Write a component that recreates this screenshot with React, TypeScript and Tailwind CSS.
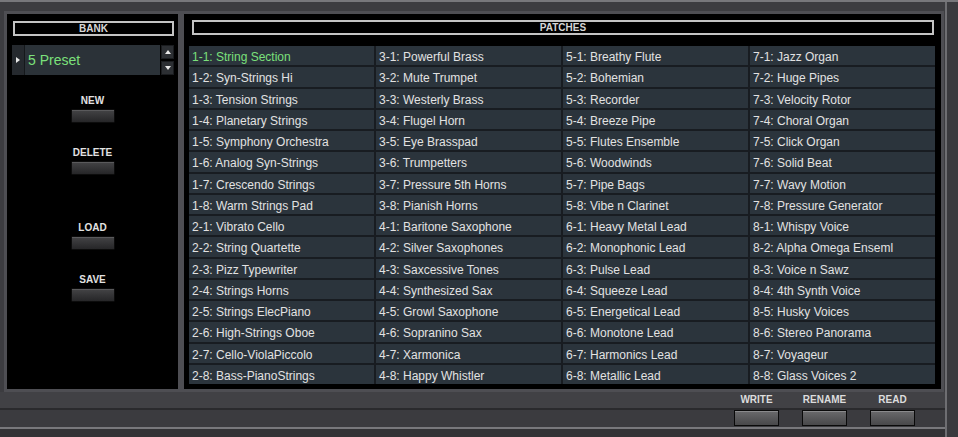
import React from 'react';

const columns: string[][] = [
  [
    '1-1: String Section',
    '1-2: Syn-Strings Hi',
    '1-3: Tension Strings',
    '1-4: Planetary Strings',
    '1-5: Symphony Orchestra',
    '1-6: Analog Syn-Strings',
    '1-7: Crescendo Strings',
    '1-8: Warm Strings Pad',
    '2-1: Vibrato Cello',
    '2-2: String Quartette',
    '2-3: Pizz Typewriter',
    '2-4: Strings Horns',
    '2-5: Strings ElecPiano',
    '2-6: High-Strings Oboe',
    '2-7: Cello-ViolaPiccolo',
    '2-8: Bass-PianoStrings',
  ],
  [
    '3-1: Powerful Brass',
    '3-2: Mute Trumpet',
    '3-3: Westerly Brass',
    '3-4: Flugel Horn',
    '3-5: Eye Brasspad',
    '3-6: Trumpetters',
    '3-7: Pressure 5th Horns',
    '3-8: Pianish Horns',
    '4-1: Baritone Saxophone',
    '4-2: Silver Saxophones',
    '4-3: Saxcessive Tones',
    '4-4: Synthesized Sax',
    '4-5: Growl Saxophone',
    '4-6: Sopranino Sax',
    '4-7: Xarmonica',
    '4-8: Happy Whistler',
  ],
  [
    '5-1: Breathy Flute',
    '5-2: Bohemian',
    '5-3: Recorder',
    '5-4: Breeze Pipe',
    '5-5: Flutes Ensemble',
    '5-6: Woodwinds',
    '5-7: Pipe Bags',
    '5-8: Vibe n Clarinet',
    '6-1: Heavy Metal Lead',
    '6-2: Monophonic Lead',
    '6-3: Pulse Lead',
    '6-4: Squeeze Lead',
    '6-5: Energetical Lead',
    '6-6: Monotone Lead',
    '6-7: Harmonics Lead',
    '6-8: Metallic Lead',
  ],
  [
    '7-1: Jazz Organ',
    '7-2: Huge Pipes',
    '7-3: Velocity Rotor',
    '7-4: Choral Organ',
    '7-5: Click Organ',
    '7-6: Solid Beat',
    '7-7: Wavy Motion',
    '7-8: Pressure Generator',
    '8-1: Whispy Voice',
    '8-2: Alpha Omega Enseml',
    '8-3: Voice n Sawz',
    '8-4: 4th Synth Voice',
    '8-5: Husky Voices',
    '8-6: Stereo Panorama',
    '8-7: Voyageur',
    '8-8: Glass Voices 2',
  ],
];

// 列優先で並べる（1列目が 1-1〜2-8）
const cells = Array.from({ length: 16 }).flatMap((_, row) => columns.map((col) => col[row]));

const DarkButton: React.FC<{ label: string; className?: string }> = ({ label, className = '' }) => (
  <div className={`flex flex-col items-center ${className}`}>
    <span className="text-[10px] leading-[11px] font-bold text-[#e2e2e2]">{label}</span>
    <div className="mt-[3px] w-[44px] h-[14px] rounded-[1px] border border-[#0c0c0c] bg-gradient-to-b from-[#444446] to-[#262628] shadow-[inset_0_1px_0_#5a5a5c]" />
  </div>
);

const App: React.FC = () => {
  return (
    <div
      className="w-[958px] h-[437px] overflow-hidden bg-[#3c3c40] border-t-2 border-[#77777b] flex"
      style={{ fontFamily: '"Liberation Sans", Arial, sans-serif' }}
    >
      {/* メイン領域 */}
      <div className="w-[945px] flex flex-col">
        <div className="flex pt-[9px] pl-[4px]">
          {/* BANK パネル */}
          <div className="w-[177px] h-[381px] border-[3px] border-[#4e4e53] bg-black flex flex-col">
            <div className="ml-[6px] mt-[7px] w-[161px] h-[15px] border-2 border-[#c4c4c4] flex items-center justify-center">
              <span className="text-[10px] leading-none font-bold text-[#d6d6d6]">BANK</span>
            </div>

            {/* プリセット選択 */}
            <div className="ml-[5px] mt-[9px] flex h-[30px]">
              <div className="w-[13px] h-full bg-[#25292e] border-r border-[#15181b] flex items-center justify-center">
                <svg width="4" height="6" viewBox="0 0 4 6">
                  <path d="M0 0 L4 3 L0 6 Z" fill="#e8e8e8" />
                </svg>
              </div>
              <div className="w-[135px] h-full bg-[#2b3238] flex items-center pl-[3px]">
                <span className="text-[14px] text-[#7be07b]">5 Preset</span>
              </div>
              <div className="ml-[1px] w-[13px] flex flex-col gap-[2px]">
                <div className="h-[14px] bg-[#2c2f33] border border-[#1a1c1f] flex items-center justify-center">
                  <svg width="6" height="4" viewBox="0 0 6 4">
                    <path d="M0 4 L3 0 L6 4 Z" fill="#e8e8e8" />
                  </svg>
                </div>
                <div className="h-[14px] bg-[#2c2f33] border border-[#1a1c1f] flex items-center justify-center">
                  <svg width="6" height="4" viewBox="0 0 6 4">
                    <path d="M0 0 L3 4 L6 0 Z" fill="#e8e8e8" />
                  </svg>
                </div>
              </div>
            </div>

            <DarkButton label="NEW" className="mt-[20px]" />
            <DarkButton label="DELETE" className="mt-[24px]" />
            <DarkButton label="LOAD" className="mt-[47px]" />
            <DarkButton label="SAVE" className="mt-[24px]" />
          </div>

          {/* PATCHES パネル */}
          <div className="w-[763px] h-[381px] border-[3px] border-[#4e4e53] bg-black flex flex-col">
            <div className="ml-[8px] mt-[6px] w-[742px] h-[15px] border-2 border-[#c4c4c4] flex items-center justify-center">
              <span className="text-[10px] leading-none font-bold text-[#d6d6d6]">PATCHES</span>
            </div>
            <div className="ml-[5px] mt-[11px] w-[746px] h-[338px] grid grid-cols-4 grid-rows-16 gap-[2px] bg-[#181c21]">
              {cells.map((name, i) => (
                <div
                  key={name}
                  className={`bg-[#2b343c] pl-[3px] pt-[4px] text-[12px] leading-[14px] whitespace-nowrap overflow-hidden ${
                    i === 0 ? 'text-[#7be07b]' : 'text-[#e2e2e2]'
                  }`}
                >
                  {name}
                </div>
              ))}
            </div>
          </div>
        </div>

        {/* 下部ボタンバー */}
        <div className="flex-1 flex flex-col">
          <div className="h-[16px] bg-[#414145] flex justify-end pr-[30px] gap-[23px] items-center">
            {['WRITE', 'RENAME', 'READ'].map((l) => (
              <span key={l} className="w-[45px] text-center text-[10px] leading-none font-bold text-[#dcdcdc]">
                {l}
              </span>
            ))}
          </div>
          <div className="h-[2px] bg-[#2a2a2d]" />
          <div className="h-[17px] bg-[#3b3b3f] flex justify-end pr-[30px] gap-[23px]">
            {['WRITE', 'RENAME', 'READ'].map((l) => (
              <div
                key={l}
                className="w-[45px] h-[16px] border border-[#0a0a0a] bg-gradient-to-b from-[#6a6a6c] to-[#48484a] shadow-[inset_0_1px_0_#8a8a8c]"
              />
            ))}
          </div>
          <div className="h-[2px] bg-[#78787c]" />
          <div className="flex-1 bg-[#333336]" />
        </div>
      </div>

      {/* 右端フレーム */}
      <div className="flex-1 border-l-2 border-[#6e6e72] bg-[#3a3a3e]" />
    </div>
  );
};

export default App;
